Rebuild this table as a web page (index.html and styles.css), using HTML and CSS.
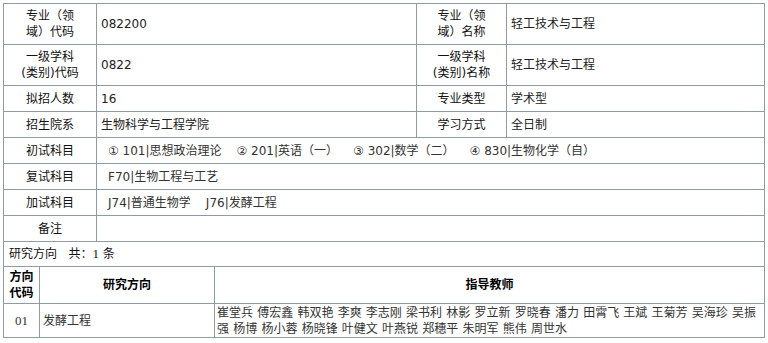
FILE: index.html
```html
<!DOCTYPE html>
<html lang="zh-CN">
<head>
<meta charset="utf-8">
<title>专业信息</title>
<link rel="stylesheet" href="styles.css">
</head>
<body>
<div class="page">
  <table class="info">
    <colgroup>
      <col class="c1"><col class="c2"><col class="c3"><col class="c4">
    </colgroup>
    <tr class="tall">
      <td class="lbl">专业（领域）代码</td>
      <td class="val">082200</td>
      <td class="lbl">专业（领域）名称</td>
      <td class="val">轻工技术与工程</td>
    </tr>
    <tr class="tall">
      <td class="lbl">一级学科(类别)代码</td>
      <td class="val">0822</td>
      <td class="lbl">一级学科(类别)名称</td>
      <td class="val">轻工技术与工程</td>
    </tr>
    <tr>
      <td class="lbl">拟招人数</td>
      <td class="val">16</td>
      <td class="lbl">专业类型</td>
      <td class="val">学术型</td>
    </tr>
    <tr>
      <td class="lbl">招生院系</td>
      <td class="val">生物科学与工程学院</td>
      <td class="lbl">学习方式</td>
      <td class="val">全日制</td>
    </tr>
    <tr>
      <td class="lbl">初试科目</td>
      <td class="val subj" colspan="3"><span class="item">① 101|思想政治理论</span><span class="item">② 201|英语（一）</span><span class="item">③ 302|数学（二）</span><span class="item">④ 830|生物化学（自）</span></td>
    </tr>
    <tr>
      <td class="lbl">复试科目</td>
      <td class="val subj" colspan="3">F70|生物工程与工艺</td>
    </tr>
    <tr>
      <td class="lbl">加试科目</td>
      <td class="val subj" colspan="3"><span class="item">J74|普通生物学</span><span class="item">J76|发酵工程</span></td>
    </tr>
    <tr>
      <td class="lbl">备注</td>
      <td class="val" colspan="3"></td>
    </tr>
  </table>
  <table class="dirs">
    <colgroup>
      <col class="d1"><col class="d2"><col class="d3">
    </colgroup>
    <tr>
      <td class="count" colspan="3">研究方向&nbsp;&nbsp;&nbsp;共：<span class="num">1</span> 条</td>
    </tr>
    <tr class="head">
      <th>方向代码</th>
      <th>研究方向</th>
      <th>指导教师</th>
    </tr>
    <tr class="row">
      <td class="code">01</td>
      <td class="dname">发酵工程</td>
      <td class="teachers">崔堂兵 傅宏鑫 韩双艳 李爽 李志刚 梁书利 林影 罗立新 罗晓春 潘力 田霄飞 王斌 王菊芳 吴海珍 吴振强 杨博 杨小蓉 杨晓锋 叶健文 叶燕锐 郑穗平 朱明军 熊伟 周世水</td>
    </tr>
  </table>
</div>
</body>
</html>
```

FILE: styles.css
```css
html, body {
  margin: 0;
  padding: 0;
  background: #fff;
}

.page {
  padding: 3px 0 0 3px;
  font-family: "DejaVu Sans", "Noto Sans CJK SC", sans-serif;
  font-size: 12px;
  color: #000;
}

table {
  border-collapse: collapse;
  table-layout: fixed;
  width: 761px;
}

td, th {
  border: 1px solid #8e9ca6;
  padding: 0;
}

.c1 { width: 93px; }
.c2 { width: 320px; }
.c3 { width: 90px; }
.c4 { width: 258px; }

.info td {
  height: 25px;
  line-height: 16px;
  padding: 0 4px;
}

.info tr.tall td {
  height: 40px;
}

.info .lbl {
  text-align: center;
  padding: 0 14px;
  color: #111;
}

.info .val {
  text-align: left;
  color: #222;
}

.info .subj {
  padding-left: 11px;
  color: #333;
}

.item {
  margin-right: 15px;
}

.dirs {
  margin-top: -1px;
}

.d1 { width: 36px; }
.d2 { width: 175px; }
.d3 { width: 550px; }

.count {
  height: 24px;
  padding: 0 5px !important;
  line-height: 16px;
  color: #111;
}

.num {
  font-family: "Liberation Serif", serif;
  font-size: 13px;
}

.head th {
  height: 36px;
  font-weight: bold;
  font-size: 12px;
  line-height: 16px;
  color: #000;
  padding: 0 2px;
}

.row td {
  height: 33px;
  line-height: 16px;
  color: #333;
}

.code {
  text-align: center;
  font-family: "Liberation Serif", serif;
  font-size: 13px;
}

.dname {
  padding-left: 3px !important;
}

.teachers {
  padding: 0 0 0 2px !important;
  word-spacing: 0.4px;
}
```
